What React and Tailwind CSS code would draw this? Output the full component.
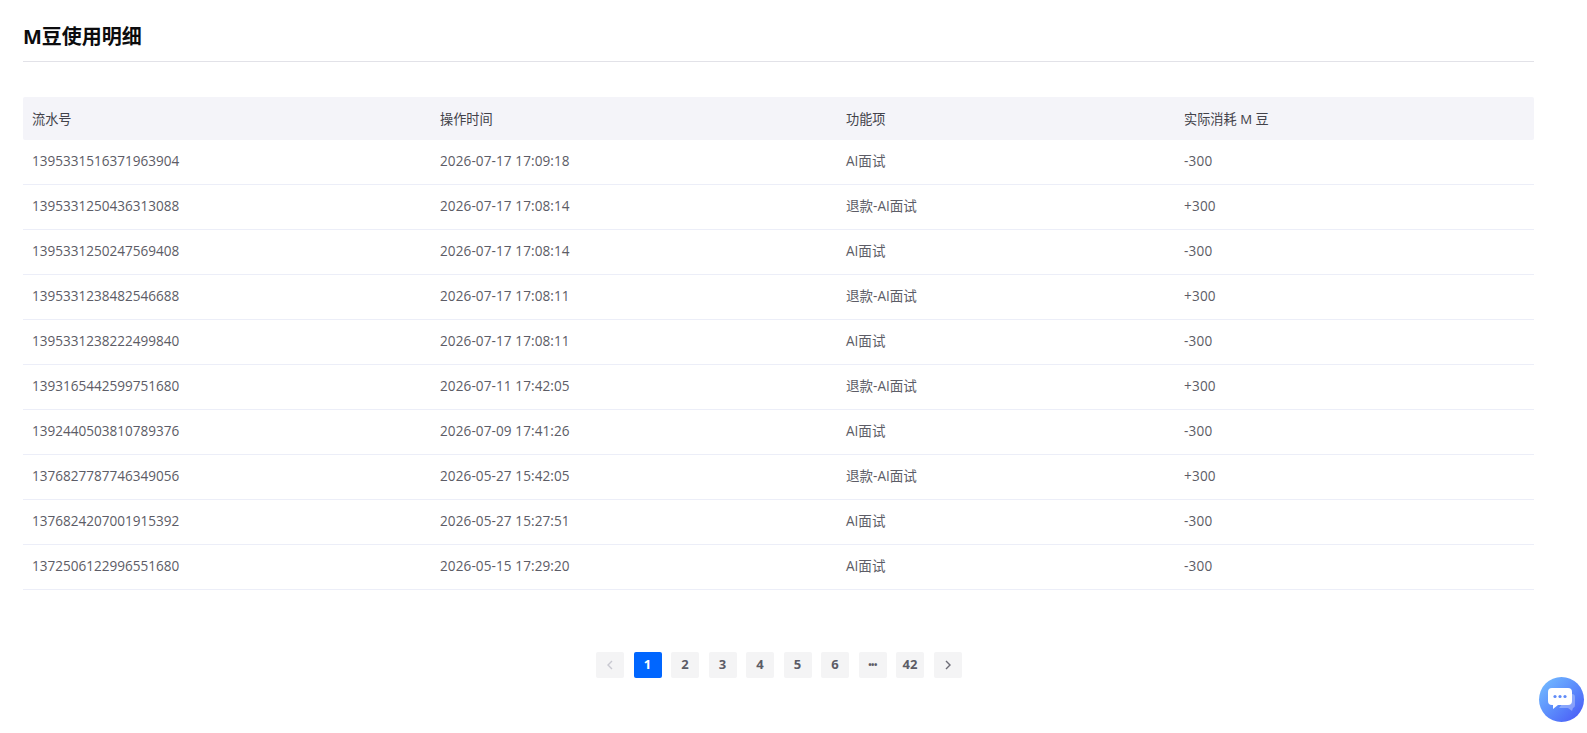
const rows = [
  ['1395331516371963904', '2026-07-17 17:09:18', 'AI面试', '-300'],
  ['1395331250436313088', '2026-07-17 17:08:14', '退款-AI面试', '+300'],
  ['1395331250247569408', '2026-07-17 17:08:14', 'AI面试', '-300'],
  ['1395331238482546688', '2026-07-17 17:08:11', '退款-AI面试', '+300'],
  ['1395331238222499840', '2026-07-17 17:08:11', 'AI面试', '-300'],
  ['1393165442599751680', '2026-07-11 17:42:05', '退款-AI面试', '+300'],
  ['1392440503810789376', '2026-07-09 17:41:26', 'AI面试', '-300'],
  ['1376827787746349056', '2026-05-27 15:42:05', '退款-AI面试', '+300'],
  ['1376824207001915392', '2026-05-27 15:27:51', 'AI面试', '-300'],
  ['1372506122996551680', '2026-05-15 17:29:20', 'AI面试', '-300'],
]

const pages = ['1', '2', '3', '4', '5', '6', '•••', '42']

function Chevron({ dir, className }) {
  return (
    <svg width="8" height="10" viewBox="0 0 8 10" fill="none" className={className}>
      <path d={dir === 'left' ? 'M6 1L2 5l4 4' : 'M2 1l4 4-4 4'} stroke="currentColor" strokeWidth="1.4" />
    </svg>
  )
}

export default function App() {
  return (
    <div className="relative h-[733px] w-[1587px] overflow-hidden bg-white font-['Open_Sans','Noto_Sans_CJK_SC',sans-serif]">
      <div className="ml-[23px] w-[1511px]">
        <div className="flex h-[62px] items-center border-b border-[#e2e2e8] pt-[12px]">
          <h1 className="font-['Noto_Sans','Noto_Sans_CJK_SC',sans-serif] text-[20px] font-bold leading-none text-[#0c0c0e]">M豆使用明细</h1>
        </div>

        <table className="mt-[35px] w-full table-fixed border-separate border-spacing-0 text-[13.55px] text-[#5c5c66]">
          <colgroup>
            <col className="w-[407px]" />
            <col className="w-[406px]" />
            <col className="w-[338px]" />
            <col />
          </colgroup>
          <thead>
            <tr className="h-[43px] text-left text-[13.2px] text-[#42424a]">
              <th className="rounded-l-[2px] bg-[#f4f4f9] pl-[9px] pt-[2px] font-normal">流水号</th>
              <th className="bg-[#f4f4f9] pl-[10px] pt-[2px] font-normal">操作时间</th>
              <th className="bg-[#f4f4f9] pl-[10px] pt-[2px] font-normal">功能项</th>
              <th className="rounded-r-[2px] bg-[#f4f4f9] pl-[10px] pt-[2px] font-normal">实际消耗 M 豆</th>
            </tr>
          </thead>
          <tbody>
            {rows.map((row) => (
              <tr key={row[0]} className="h-[45px]">
                <td className="border-b border-[#eceef8] pb-[1px] pl-[9px]">{row[0]}</td>
                <td className="border-b border-[#eceef8] pb-[1px] pl-[10px] tracking-[0.1px]">{row[1]}</td>
                <td className="border-b border-[#eceef8] pb-[1px] pl-[10px]">{row[2]}</td>
                <td className="border-b border-[#eceef8] pb-[1px] pl-[10px] tracking-[0.2px]">{row[3]}</td>
              </tr>
            ))}
          </tbody>
        </table>

        {/* Pagination */}
        <div className="mt-[62px] ml-[573px] flex gap-[9.5px]">
          <button className="flex h-[26px] w-[28px] items-center justify-center rounded-[2px] bg-[#f4f4f5] text-[#c8c8d0]">
            <Chevron dir="left" />
          </button>
          {pages.map((p) => (
            <button
              key={p}
              className={
                p === '1'
                  ? 'flex h-[26px] w-[28px] items-center justify-center rounded-[2px] bg-[#0066ff] text-[13px] font-bold text-white'
                  : p === '•••'
                    ? 'flex h-[26px] w-[28px] items-center justify-center rounded-[2px] bg-[#f4f4f5] text-[9px] font-bold tracking-[-0.5px] text-[#5c5c66]'
                    : 'flex h-[26px] w-[28px] items-center justify-center rounded-[2px] bg-[#f4f4f5] text-[13px] font-bold text-[#5c5c66]'
              }
            >
              {p}
            </button>
          ))}
          <button className="flex h-[26px] w-[28px] items-center justify-center rounded-[2px] bg-[#f4f4f5] text-[#6c6c76]">
            <Chevron dir="right" />
          </button>
        </div>
      </div>

      {/* Floating chat button */}
      <button className="absolute left-[1539px] top-[677px] flex h-[45px] w-[45px] items-center justify-center rounded-full bg-gradient-to-br from-[#78c1ff] to-[#4a50f5]">
        <svg width="30" height="26" viewBox="0 0 30 26" fill="none">
          <path d="M23 7h2a3 3 0 0 1 3 3v8a3 3 0 0 1-2 3l-1 3-4-3H12z" fill="#ffffff" fillOpacity="0.3" />
          <path d="M5 1h16a4 4 0 0 1 4 4v9a4 4 0 0 1-4 4H11l-5 4v-4H5a4 4 0 0 1-4-4V5a4 4 0 0 1 4-4z" fill="#ffffff" />
          <circle cx="8" cy="9.5" r="1.6" fill="#5f8bf8" />
          <circle cx="13" cy="9.5" r="1.6" fill="#5f8bf8" />
          <circle cx="18" cy="9.5" r="1.6" fill="#5f8bf8" />
        </svg>
      </button>
    </div>
  )
}
